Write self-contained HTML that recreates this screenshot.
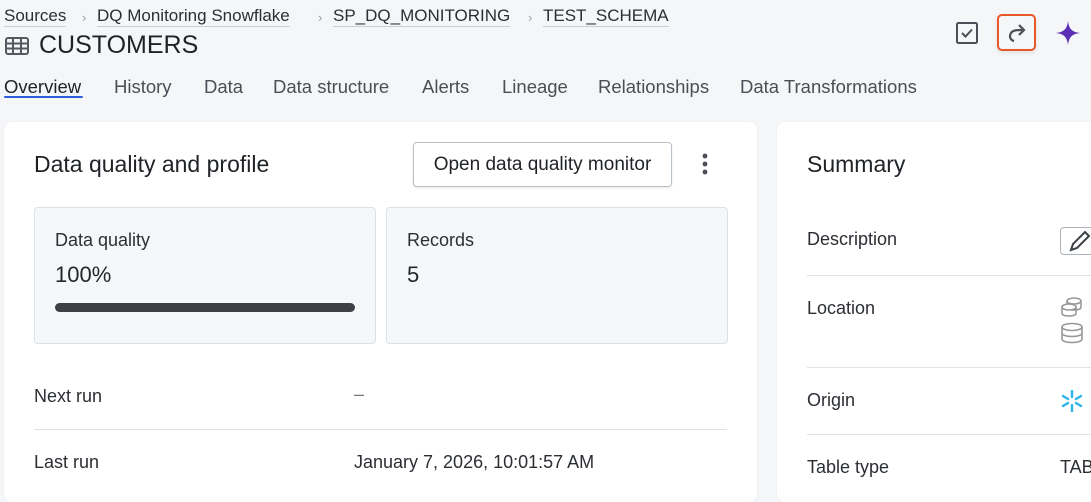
<!DOCTYPE html>
<html><head><meta charset="utf-8"><style>
*{box-sizing:border-box;margin:0;padding:0}
body{width:1091px;height:492px;overflow:hidden;background:#f5f6f8;font-family:"Liberation Sans",sans-serif;color:#23262b;position:relative}
.a{position:absolute;white-space:nowrap}
.bc{font-size:17px;color:#2b2e33;top:6px}
.bc u{text-decoration:none;border-bottom:1px solid #c9ced4;padding-bottom:1px}
.sep{color:#9aa0a6;font-size:13px;top:10px}
.tab{top:76px;font-size:18.5px;color:#4a4f56}
.card{position:absolute;background:#fff;border-radius:8px;box-shadow:0 0 2px rgba(0,0,0,.06)}
.box{position:absolute;background:#f6f7f9;border:1px solid #dde1e5;border-radius:4px}
.lbl{font-size:18px;color:#2b2e33}
.hr{position:absolute;height:1px;background:#dfe3e7}
</style></head><body>
<div class="a bc" style="left:4px"><u>Sources</u></div>
<div class="a sep" style="left:82px">›</div>
<div class="a bc" style="left:97px"><u>DQ Monitoring Snowflake</u></div>
<div class="a sep" style="left:318px">›</div>
<div class="a bc" style="left:333px"><u>SP_DQ_MONITORING</u></div>
<div class="a sep" style="left:528px">›</div>
<div class="a bc" style="left:543px"><u>TEST_SCHEMA</u></div>
<svg class="a" style="left:5px;top:37px" width="24" height="18" viewBox="0 0 24 18"><rect x="1" y="1" width="22" height="16" rx="2" fill="none" stroke="#555a60" stroke-width="2"/><path d="M1 6.5h22M1 11.5h22M8 1v16M16 1v16" stroke="#555a60" stroke-width="2"/></svg>
<div class="a" style="left:39px;top:31px;font-size:25px;color:#1f2226">CUSTOMERS</div>
<div class="a tab" style="left:4px;color:#1f2226">Overview</div>
<div class="a" style="left:4px;top:96px;width:79px;height:2px;background:#2c5fd9;border-radius:1px"></div>
<div class="a tab" style="left:114px">History</div>
<div class="a tab" style="left:204px">Data</div>
<div class="a tab" style="left:273px">Data structure</div>
<div class="a tab" style="left:422px">Alerts</div>
<div class="a tab" style="left:502px">Lineage</div>
<div class="a tab" style="left:598px">Relationships</div>
<div class="a tab" style="left:740px">Data Transformations</div>
<svg class="a" style="left:955px;top:21px" width="24" height="24" viewBox="0 0 24 24"><rect x="2" y="2" width="20" height="20" rx="1.5" fill="none" stroke="#4a4f56" stroke-width="2"/><path d="M7 12l3.5 3.5L17 8.5" fill="none" stroke="#4a4f56" stroke-width="2"/></svg>
<div class="a" style="left:997px;top:14px;width:39px;height:37px;border:2.5px solid #e8582a;border-radius:5px;background:#f5f6f8;box-shadow:0 2px 4px rgba(0,0,0,.08)"></div>
<svg class="a" style="left:1004px;top:20px" width="26" height="26" viewBox="0 0 26 26"><path d="M10 21c-4-1-5-5-3-8s6-3 11-3" fill="none" stroke="#4a4f56" stroke-width="2.2"/><path d="M15 5l5 5-5 5" fill="none" stroke="#4a4f56" stroke-width="2.2"/></svg>
<svg class="a" style="left:1055px;top:20px" width="26" height="26" viewBox="0 0 26 26"><path d="M13 1C14 9 17 12 25 13 17 14 14 17 13 25 12 17 9 14 1 13 9 12 12 9 13 1Z" fill="#5a2fb5"/></svg>

<div class="card" style="left:4px;top:122px;width:753px;height:380px"></div>
<div class="a" style="left:34px;top:151px;font-size:23px;color:#1f2226">Data quality and profile</div>
<div class="a" style="left:413px;top:142px;width:259px;height:45px;border:1px solid #b9c1c9;border-radius:4px;background:#fff;box-shadow:0 1px 2px rgba(0,0,0,.1);font-size:19px;text-align:center;line-height:43px;color:#1f2226">Open data quality monitor</div>
<svg class="a" style="left:700px;top:153px" width="10" height="24"><circle cx="5" cy="3" r="2.4" fill="#4a4f56"/><circle cx="5" cy="11" r="2.4" fill="#4a4f56"/><circle cx="5" cy="19" r="2.4" fill="#4a4f56"/></svg>
<div class="box" style="left:34px;top:207px;width:342px;height:137px"></div>
<div class="box" style="left:386px;top:207px;width:342px;height:137px"></div>
<div class="a lbl" style="left:55px;top:230px">Data quality</div>
<div class="a" style="left:55px;top:262px;font-size:22px">100%</div>
<div class="a" style="left:55px;top:303px;width:300px;height:9px;border-radius:5px;background:#3d4046"></div>
<div class="a lbl" style="left:407px;top:230px">Records</div>
<div class="a" style="left:407px;top:262px;font-size:22px">5</div>
<div class="a lbl" style="left:34px;top:386px">Next run</div>
<div class="a lbl" style="left:354px;top:384px;color:#777">–</div>
<div class="hr" style="left:34px;top:429px;width:693px"></div>
<div class="a lbl" style="left:34px;top:452px">Last run</div>
<div class="a lbl" style="left:354px;top:452px">January 7, 2026, 10:01:57 AM</div>

<div class="card" style="left:777px;top:122px;width:330px;height:380px"></div>
<div class="a" style="left:807px;top:151px;font-size:23px;color:#1f2226">Summary</div>
<div class="a lbl" style="left:807px;top:229px">Description</div>
<div class="a" style="left:1060px;top:227px;width:40px;height:28px;border:1px solid #aab3bb;border-radius:4px;background:#fff"></div>
<svg class="a" style="left:1068px;top:229px" width="23" height="24" viewBox="0 0 23 24"><path d="M3 21l2-6L17 3l4 4L9 19z" fill="none" stroke="#3d4046" stroke-width="2"/></svg>
<div class="hr" style="left:807px;top:275px;width:290px"></div>
<div class="a lbl" style="left:807px;top:298px">Location</div>
<svg class="a" style="left:1060px;top:296px" width="24" height="50" viewBox="0 0 24 50"><g fill="none" stroke="#999" stroke-width="1.6"><ellipse cx="14" cy="5" rx="7" ry="3"/><path d="M7 5v6c0 2 3 3 7 3s7-1 7-3V5"/><ellipse cx="9" cy="11" rx="7" ry="3" fill="#fff"/><path d="M2 11v6c0 2 3 3 7 3s7-1 7-3v-6"/><ellipse cx="12" cy="31" rx="10" ry="3.5"/><path d="M2 31v12c0 2 4 3.5 10 3.5s10-1.5 10-3.5V31M2 37c0 2 4 3.5 10 3.5s10-1.5 10-3.5"/></g></svg>
<div class="hr" style="left:807px;top:367px;width:290px"></div>
<div class="a lbl" style="left:807px;top:390px">Origin</div>
<svg class="a" style="left:1061px;top:390px" width="22" height="22" viewBox="0 0 22 22"><g stroke="#2bb5e8" stroke-width="2.4" stroke-linecap="round"><path d="M11 1v6M11 15v6M2 6l5 3M15 13l5 3M2 16l5-3M15 9l5-3"/></g></svg>
<div class="hr" style="left:807px;top:434px;width:290px"></div>
<div class="a lbl" style="left:807px;top:457px">Table type</div>
<div class="a lbl" style="left:1060px;top:457px">TABLE</div>
</body></html>
